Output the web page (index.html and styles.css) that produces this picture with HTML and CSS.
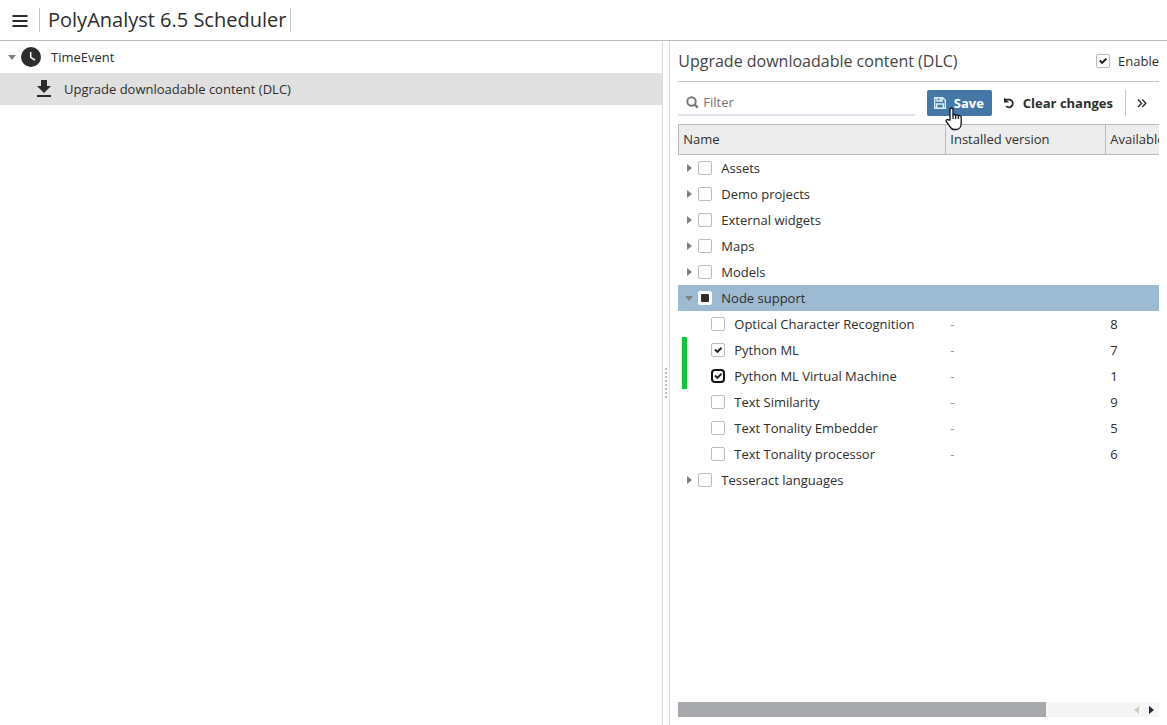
FILE: index.html
```html
<!DOCTYPE html>
<html lang="en">
<head>
<meta charset="utf-8">
<title>PolyAnalyst 6.5 Scheduler</title>
<link rel="stylesheet" href="styles.css">
</head>
<body>
<header class="topbar">
  <button class="menu-button" type="button" aria-label="Menu">
    <svg width="16" height="14" viewBox="0 0 16 14"><path d="M.5 3h15M.5 8h15M.5 13h15" stroke="#2b2b2b" stroke-width="2"/></svg>
  </button>
  <h1 class="app-title">PolyAnalyst 6.5 Scheduler</h1>
</header>
<main class="workspace">
  <nav class="events">
    <div class="event">
      <button class="toggle open" type="button" aria-label="Collapse TimeEvent"></button>
      <svg class="clock" width="20" height="20" viewBox="0 0 20 20"><circle cx="10" cy="10" r="10" fill="#2d2d2d"/><path d="M9.700 5v5.300l4.300 2.900" fill="none" stroke="#fff" stroke-width="1.500"/></svg>
      <span>TimeEvent</span>
    </div>
    <div class="event child selected">
      <svg width="16" height="18" viewBox="0 0 16 18"><path d="M5 0h6v6h4L8 13 1 6h4zM1 15h14v2H1z" fill="#2b2b2b"/></svg>
      <span>Upgrade downloadable content (DLC)</span>
    </div>
  </nav>
  <div class="splitter"><span class="grip"></span></div>
  <section class="details">
    <div class="details-head">
      <h2 class="details-title">Upgrade downloadable content (DLC)</h2>
      <label class="enable"><input class="check" type="checkbox" checked>Enable</label>
    </div>
    <div class="toolbar">
      <label class="filter">
        <svg width="14" height="14" viewBox="0 0 14 14" fill="none" stroke="#777"><circle cx="5.500" cy="6.500" r="4.200" stroke-width="2"/><path d="M8.700 9.700l3 3" stroke-width="2.400"/></svg>
        <input class="filter-input" type="text" placeholder="Filter" aria-label="Filter">
      </label>
      <button class="save" type="button">
        <svg width="12" height="12" viewBox="0 0 12 12" fill="none" stroke="#d9f0f7" stroke-width="1.400"><path d="M.7.7h8l2.600 2.600v8H.7zM3 .7v3.300h5V.7M2.700 11V7h6.600v4"/><path d="M6.500 1v3" stroke-width="1.600"/></svg>
        Save
        <svg class="pointer" width="18" height="24" viewBox="0 0 18 24"><path d="M5 13V2.500a1.500 1.500 0 0 1 3 0V8.500c0-1.400 2.700-1.400 2.700.3 0-1.200 2.600-1.200 2.600.5 0-1.100 2.900-1 2.900.8V16c0 3-1.500 6.500-5 6.500H9c-2.200 0-3.200-1.500-4.200-3.200L1.300 14.500c-.9-1.500.9-2.800 2.200-1.500z" fill="#fff" stroke="#111522" stroke-width="1.300" stroke-linejoin="round"/><path d="M8 8.500V12M10.700 9v3M13.300 9.500V12" stroke="#111522" stroke-width="1.200"/></svg>
      </button>
      <button class="clear" type="button">
        <svg width="12" height="12" viewBox="0 0 12 12" fill="none" stroke="#2b2b2b"><path d="M2 2.600H6.600a3.900 3.900 0 1 1-3.400 6.600" stroke-width="1.800"/><path d="M1 .5v5.100h5.100z" fill="#2b2b2b" stroke="none"/></svg>
        Clear changes
      </button>
      <button class="more" type="button" aria-label="More actions">
        <svg width="10" height="10" viewBox="0 0 10 10" fill="none" stroke="#2b2b2b" stroke-width="1.400"><path d="M1 1.500L4.500 5.300 1 9M5.300 1.500l3.500 3.800L5.300 9"/></svg>
      </button>
    </div>
    <div class="table-area">
      <table class="packages">
        <colgroup><col class="col-name"><col class="col-installed"><col class="col-available"></colgroup>
        <thead><tr><th>Name</th><th>Installed version</th><th>Available version</th></tr></thead>
        <tbody>
          <tr><td><div class="node"><button class="toggle" type="button" aria-label="Expand Assets"></button><label><input class="check" type="checkbox">Assets</label></div></td><td></td><td></td></tr>
          <tr><td><div class="node"><button class="toggle" type="button" aria-label="Expand Demo projects"></button><label><input class="check" type="checkbox">Demo projects</label></div></td><td></td><td></td></tr>
          <tr><td><div class="node"><button class="toggle" type="button" aria-label="Expand External widgets"></button><label><input class="check" type="checkbox">External widgets</label></div></td><td></td><td></td></tr>
          <tr><td><div class="node"><button class="toggle" type="button" aria-label="Expand Maps"></button><label><input class="check" type="checkbox">Maps</label></div></td><td></td><td></td></tr>
          <tr><td><div class="node"><button class="toggle" type="button" aria-label="Expand Models"></button><label><input class="check" type="checkbox">Models</label></div></td><td></td><td></td></tr>
          <tr class="current"><td><div class="node"><button class="toggle open" type="button" aria-label="Collapse Node support"></button><label><input class="check partial" type="checkbox">Node support</label></div></td><td></td><td></td></tr>
          <tr><td><div class="node leaf"><label><input class="check" type="checkbox">Optical Character Recognition</label></div></td><td class="none">-</td><td>8</td></tr>
          <tr class="changed"><td><div class="node leaf"><label><input class="check" type="checkbox" checked>Python ML</label></div></td><td class="none">-</td><td>7</td></tr>
          <tr class="changed"><td><div class="node leaf"><label><input class="check focused" type="checkbox" checked>Python ML Virtual Machine</label></div></td><td class="none">-</td><td>1</td></tr>
          <tr><td><div class="node leaf"><label><input class="check" type="checkbox">Text Similarity</label></div></td><td class="none">-</td><td>9</td></tr>
          <tr><td><div class="node leaf"><label><input class="check" type="checkbox">Text Tonality Embedder</label></div></td><td class="none">-</td><td>5</td></tr>
          <tr><td><div class="node leaf"><label><input class="check" type="checkbox">Text Tonality processor</label></div></td><td class="none">-</td><td>6</td></tr>
          <tr><td><div class="node"><button class="toggle" type="button" aria-label="Expand Tesseract languages"></button><label><input class="check" type="checkbox">Tesseract languages</label></div></td><td></td><td></td></tr>
        </tbody>
      </table>
    </div>
    <div class="scrollbar">
      <div class="thumb"></div>
      <button class="arrow left" type="button" aria-label="Scroll left"></button>
      <button class="arrow right" type="button" aria-label="Scroll right"></button>
    </div>
  </section>
</main>
</body>
</html>
```

FILE: styles.css
```css
* { box-sizing: border-box; }

body {
  margin: 0;
  height: 100vh;
  display: flex;
  flex-direction: column;
  background: #fff;
  color: #2d2d2d;
  font: 13px/20px "Open Sans", sans-serif;
  overflow: hidden;
}

button {
  margin: 0;
  padding: 0;
  border: 0;
  background: none;
  color: inherit;
  font: inherit;
}

svg { display: block; flex: none; }
h1, h2 { margin: 0; font-weight: 400; }

.topbar {
  flex: none;
  display: flex;
  align-items: center;
  padding: 8px 12px;
  border-bottom: 1px solid #bdbdbd;
}

.menu-button { width: 27px; }

.app-title {
  padding: 0 4px 0 8px;
  border-left: 1px solid #c4c4c4;
  border-right: 1px solid #c4c4c4;
  font-size: 20px;
  line-height: 24px;
}

.workspace {
  flex: 1;
  min-height: 0;
  display: grid;
  grid-template-columns: minmax(0, 4fr) 8px minmax(0, 3fr);
}

.event {
  display: flex;
  align-items: center;
  gap: 10px;
  height: 32px;
  padding-left: 7px;
}

.event .toggle { margin-right: -6px; }
.event.child { gap: 12px; padding-left: 36px; }
.event.selected { background: #e0e0e0; }

.toggle {
  display: flex;
  align-items: center;
  justify-content: center;
  width: 10px;
  height: 16px;
}

.toggle::before {
  content: "";
  border: 4px solid transparent;
  border-left: 5px solid #808080;
  border-right: 0;
}

.toggle.open::before {
  border: 4px solid transparent;
  border-top: 5px solid #808080;
  border-bottom: 0;
}

.splitter {
  display: flex;
  align-items: center;
  justify-content: center;
  border-left: 1px solid #dcdcdc;
  border-right: 1px solid #dcdcdc;
}

.grip {
  width: 2px;
  height: 30px;
  background: repeating-linear-gradient(#bbb 0 2px, transparent 2px 4px);
}

.details {
  display: flex;
  flex-direction: column;
  padding: 0 8px 8px;
}

.details-head {
  display: flex;
  align-items: center;
  justify-content: space-between;
  height: 41px;
  border-bottom: 1px solid #c4c4c4;
}

.details-title { color: #444; font-size: 16px; line-height: 24px; }

.enable, .node label {
  display: flex;
  align-items: center;
  gap: 8px;
}

.check {
  appearance: none;
  display: grid;
  place-items: center;
  flex: none;
  width: 14px;
  height: 14px;
  margin: 0;
  border: 1px solid #bbb;
  border-radius: 2px;
  background: #fff;
}

.node .check { margin-right: 1px; }

.check:checked::before {
  content: "";
  width: 8px;
  height: 8px;
  background: #222;
  clip-path: polygon(0 52%, 18% 34%, 38% 56%, 82% 14%, 100% 32%, 38% 92%);
}

.check.partial { border-color: #fff; }

.check.partial::before {
  content: "";
  width: 8px;
  height: 8px;
  border-radius: 1px;
  background: #2d2d2d;
}

.check.focused { border: 2px solid #111; border-radius: 4px; }

.toolbar {
  display: flex;
  align-items: center;
  height: 42px;
}

.filter {
  flex: 1;
  display: flex;
  align-items: center;
  gap: 3px;
  height: 26px;
  margin-right: 12px;
  padding-left: 8px;
  border-bottom: 2px solid #dfe3ec;
}

.filter-input {
  flex: 1;
  min-width: 0;
  padding: 0;
  border: 0;
  outline: 0;
  background: none;
  font: inherit;
}

.filter-input::placeholder { color: #757575; opacity: 1; }

.save, .clear {
  display: flex;
  align-items: center;
  gap: 8px;
  height: 26px;
  padding: 0 8px 0 7px;
  font-weight: 700;
  white-space: nowrap;
}

.save {
  position: relative;
  background: #4477a8;
  border-radius: 2px;
  color: #fff;
}

.clear { margin-left: 4px; padding-right: 12px; }

.pointer { position: absolute; left: 18px; top: 17px; z-index: 1; }

.more {
  display: flex;
  align-items: center;
  height: 26px;
  padding: 0 12px 0 11px;
  border-left: 1px solid #c4c4c4;
}

.table-area {
  flex: 1;
  min-height: 0;
  overflow: hidden;
}

.packages {
  width: 628px;
  table-layout: fixed;
  border-collapse: separate;
  border-spacing: 0;
}

.col-name { width: 268px; }
.col-installed { width: 160px; }
.col-available { width: 200px; }

.packages th {
  height: 31px;
  padding: 0 4px 2px;
  border: solid #bbb;
  border-width: 1px 1px 1px 0;
  background: #ededed;
  font-weight: 400;
  text-align: left;
}

.packages th:first-child { border-left-width: 1px; }

.packages td { height: 26px; padding: 0 4px; }
.packages td:first-child { position: relative; padding-left: 6px; }
.packages td.none { color: #999; }
.current td { background: #9dbad3; }

.node { display: flex; align-items: center; gap: 4px; }
.node.leaf { padding-left: 27px; }

.changed td:first-child::before {
  content: "";
  position: absolute;
  left: 4px;
  top: 0;
  bottom: 0;
  width: 5px;
  background: #0bc834;
}

.scrollbar {
  flex: none;
  display: grid;
  grid-template-columns: 368px 1fr 15px 15px;
  height: 15px;
  background: #f5f5f5;
}

.thumb { background: #a8a9ad; }

.arrow { display: flex; align-items: center; justify-content: center; }
.arrow::before { content: ""; border: 4px solid transparent; }
.left { grid-column: 3; }
.left::before { border-right: 5px solid #ccc; border-left: 0; }
.right::before { border-left: 5px solid #1d2a40; border-right: 0; }
```
